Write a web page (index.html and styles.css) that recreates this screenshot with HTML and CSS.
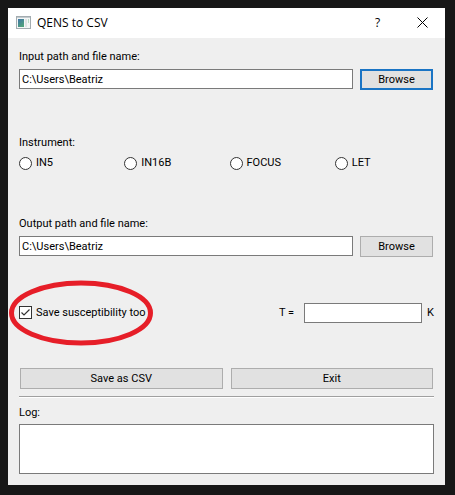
FILE: index.html
```html
<!DOCTYPE html>
<html lang="en">
<head>
<meta charset="utf-8">
<meta name="viewport" content="width=device-width, initial-scale=1">
<title>QENS to CSV</title>
<link rel="stylesheet" href="styles.css">
</head>
<body>
<main class="window">
  <header class="titlebar">
    <svg class="app-icon" width="15" height="13" viewBox="0 0 15 13" aria-hidden="true">
      <defs>
        <linearGradient id="pane" x1="0" y1="0" x2="0.6" y2="1">
          <stop offset="0" stop-color="#3f74a8"/>
          <stop offset="1" stop-color="#4fa27c"/>
        </linearGradient>
      </defs>
      <rect x="0.5" y="0.5" width="14" height="12" fill="#f4f6f6" stroke="#a3acb0"/>
      <rect x="1" y="1" width="13" height="1" fill="#c3cace"/>
      <rect x="2" y="3" width="6" height="8" fill="url(#pane)"/>
      <rect x="9" y="3" width="2" height="8" fill="#dfe3e4"/>
      <rect x="12" y="3" width="1" height="4" fill="#b9dcc5"/>
    </svg>
    <h1 class="title">QENS to CSV</h1>
    <button class="caption-button" type="button" aria-label="Help">?</button>
    <button class="caption-button" type="button" aria-label="Close">
      <svg width="11" height="11" viewBox="0 0 11 11" aria-hidden="true">
        <path d="M0.5 0.5L10.5 10.5M10.5 0.5L0.5 10.5" stroke="#000" fill="none"/>
      </svg>
    </button>
  </header>
  <form class="content">
    <section class="group">
      <label for="input-path">Input path and file name:</label>
      <div class="path-row">
        <input class="field" id="input-path" type="text" value="C:\Users\Beatriz">
        <button class="button button-default" type="button">Browse</button>
      </div>
    </section>
    <fieldset class="group">
      <legend>Instrument:</legend>
      <div class="radios">
        <label class="choice"><input type="radio" name="instrument">IN5</label>
        <label class="choice"><input type="radio" name="instrument">IN16B</label>
        <label class="choice"><input type="radio" name="instrument">FOCUS</label>
        <label class="choice"><input type="radio" name="instrument">LET</label>
      </div>
    </fieldset>
    <section class="group">
      <label for="output-path">Output path and file name:</label>
      <div class="path-row">
        <input class="field" id="output-path" type="text" value="C:\Users\Beatriz">
        <button class="button" type="button">Browse</button>
      </div>
    </section>
    <div class="options">
      <div class="marked">
        <label class="choice"><input type="checkbox" checked>Save susceptibility too</label>
        <svg class="marker" viewBox="0 0 144 66" aria-hidden="true">
          <ellipse cx="72" cy="33" rx="69.5" ry="30" fill="none" stroke="#e61e28" stroke-width="5"/>
        </svg>
      </div>
      <div class="temperature">
        <label for="temperature">T =</label>
        <input class="field" id="temperature" type="text">
        <span class="unit">K</span>
      </div>
    </div>
    <div class="actions">
      <button class="button" type="button">Save as CSV</button>
      <button class="button" type="button">Exit</button>
    </div>
    <hr class="divider">
    <label for="log">Log:</label>
    <textarea class="log" id="log" readonly></textarea>
  </form>
</main>
</body>
</html>
```
FILE: styles.css
```css
* {
  box-sizing: border-box;
}

body {
  display: flex;
  min-height: 100vh;
  margin: 0;
  padding: 8px 10px 10px 8px;
  background: #171717;
  color: #000;
  font: 11px/16px Roboto, Tahoma, sans-serif;
}

input,
button,
textarea {
  margin: 0;
  color: inherit;
  font: inherit;
}

.window {
  display: flex;
  flex: 1;
  flex-direction: column;
  background: #efefef;
}

.titlebar {
  display: flex;
  align-items: center;
  height: 30px;
  padding-left: 8px;
  background: #fff;
  font: 12px/16px "Open Sans", "Segoe UI", sans-serif;
}

.app-icon {
  margin-bottom: 2px;
}

.title {
  flex: 1;
  margin: 0 0 0 6px;
  font: inherit;
}

.caption-button {
  display: flex;
  align-items: center;
  justify-content: center;
  width: 45px;
  height: 30px;
  padding: 0 0 1px;
  border: 0;
  background: none;
}

.content {
  display: flex;
  flex: 1;
  flex-direction: column;
  padding: 11px;
}

.group {
  display: flex;
  flex-direction: column;
  gap: 4px;
  margin: 0 0 45px;
  padding: 0;
  border: 0;
}

legend {
  margin-bottom: 4px;
  padding: 0;
}

.path-row {
  display: flex;
  gap: 7px;
  padding-right: 1px;
}

.field {
  flex: 1;
  min-width: 0;
  height: 20px;
  padding: 0 2px;
  border: 1px solid #7a7a7a;
  border-radius: 0;
  background: #fff;
}

.button {
  width: 73px;
  height: 21px;
  padding: 0;
  border: 1px solid #adadad;
  border-radius: 0;
  background: #e1e1e1;
}

.button-default {
  border: 2px solid #1a74c4;
}

.radios {
  display: grid;
  grid-template-columns: repeat(4, 1fr);
  gap: 6px;
}

.choice {
  display: flex;
  align-items: center;
  gap: 4px;
  white-space: nowrap;
}

.choice input {
  flex: none;
  width: 13px;
  height: 13px;
  border: 1px solid #333;
  background: #fff;
  appearance: none;
}

.choice input[type="radio"] {
  border-radius: 50%;
}

.choice input[type="radio"]:checked {
  box-shadow: inset 0 0 0 3px #fff;
  background: #333;
}

.choice input[type="checkbox"]:checked {
  background: #fff url("data:image/svg+xml,%3Csvg xmlns='http://www.w3.org/2000/svg' viewBox='0 0 11 11'%3E%3Cpath d='M1.5 5.5L4 8L9.5 2.5' fill='none' stroke='%23333' stroke-width='1.2'/%3E%3C/svg%3E") center / 11px 11px no-repeat;
}

.options {
  display: flex;
  align-items: center;
  justify-content: space-between;
  margin-bottom: 45px;
}

.marked {
  position: relative;
}

.marker {
  position: absolute;
  top: -25px;
  left: -10px;
  width: 144px;
  height: 66px;
  pointer-events: none;
}

.temperature {
  display: flex;
  align-items: center;
  height: 21px;
}

.temperature .field {
  flex: none;
  width: 118px;
  margin: 0 5px 0 10px;
}

.actions {
  display: flex;
  gap: 8px;
  padding: 0 1px;
}

.actions .button {
  flex: 1;
}

.divider {
  width: 100%;
  height: 2px;
  margin: 7px 0;
  border: 0;
  border-top: 1px solid #a0a0a0;
  background: #fff;
}

.log {
  flex: 1;
  min-height: 50px;
  margin-top: 3px;
  padding: 2px;
  border: 1px solid #7a7a7a;
  border-radius: 0;
  background: #fff;
  resize: none;
}
```
